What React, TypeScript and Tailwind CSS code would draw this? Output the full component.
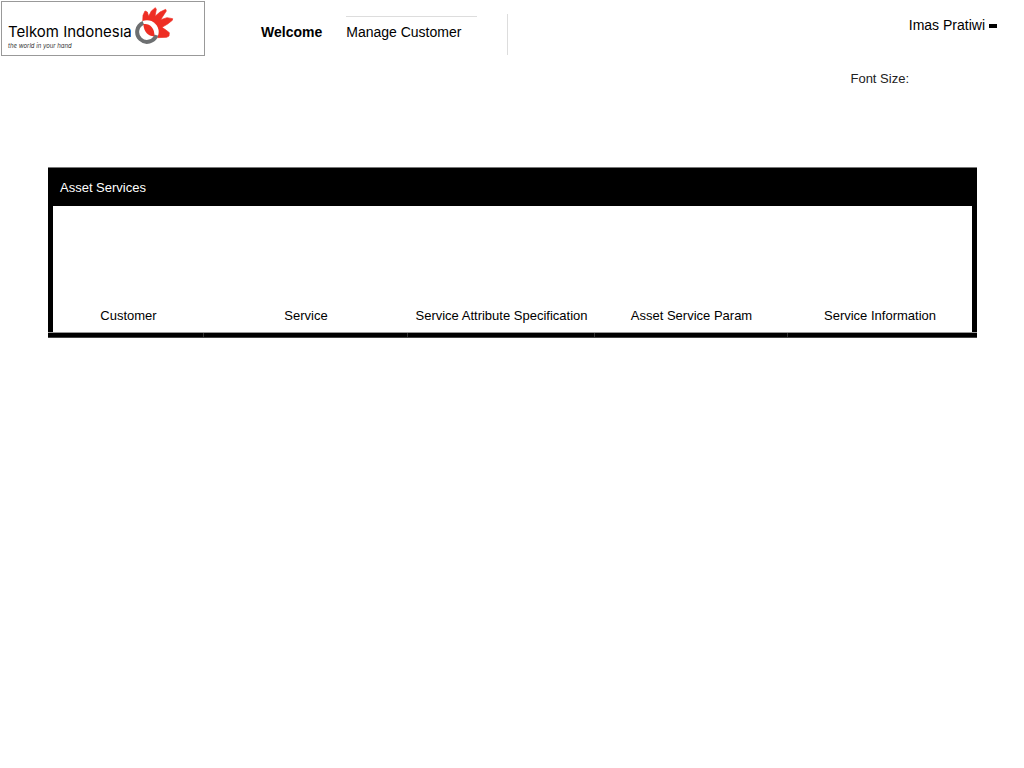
const services = [
  'Customer',
  'Service',
  'Service Attribute Specification',
  'Asset Service Param',
  'Service Information',
];

function HandMark() {
  return (
    <svg viewBox="18 12 120 114" className="h-[38px] w-10 shrink-0" aria-hidden="true">
      <path
        d="M44 62L45 40L51 27L58 30L62 43L70 27L82 17L85 22L81 43L96 30L113 22L115 27L98 53L117 47L134 50L133 55L119 66L102 76L115 85L124 92L123 102L116 106L88 107L57 88Z"
        fill="#ee2e24"
        stroke="#ee2e24"
        strokeWidth="2"
        strokeLinejoin="round"
      />
      <circle cx="57" cy="90" r="35" fill="#fff" />
      <path d="M46 62.7A29.5 29.5 0 1 0 85 99.5" fill="none" stroke="#6d6f71" strokeWidth="12" />
      <path d="M46 67C62 63 81 76 79 103C62 104 48 91 46 67Z" fill="#ee2e24" />
    </svg>
  );
}

function Logo() {
  return (
    <a
      href="#home"
      aria-label="Telkom Indonesia"
      className="mt-px ml-px flex h-[55px] w-[204px] shrink-0 items-start border border-[#999] pt-1 pl-1.5"
    >
      <span className="flex w-[126px] flex-col pt-4 font-['Inter',sans-serif] whitespace-nowrap text-black">
        <span className="text-[15px] leading-5">Telkom Indonesıa</span>
        <span className="text-[6px] leading-[8px] text-[#333] italic">the world in your hand</span>
      </span>
      <HandMark />
    </a>
  );
}

export default function App() {
  return (
    <div className="min-h-screen bg-white font-['Liberation_Sans',Arial,sans-serif] text-black">
      <header className="flex items-start">
        <Logo />
        <nav className="ml-14 flex h-[55px] items-start gap-6 text-[14px] leading-4">
          <a href="#welcome" className="pt-6 font-bold">
            Welcome
          </a>
          <span className="mt-3.5 flex h-[41px] items-start border-r border-[#ddd] pt-0.5 pr-[30px]">
            <a href="#customers" className="w-[131px] border-t border-[#ddd] pt-[7px] whitespace-nowrap">
              Manage Customer
            </a>
          </span>
        </nav>
        <button
          type="button"
          className="mt-[17px] mr-[27px] ml-auto flex items-center gap-1 text-[14px] leading-4 whitespace-nowrap"
        >
          Imas Pratiwi
          <span className="mt-0.5 h-1 w-2 bg-black" />
        </button>
      </header>
      <div className="flex justify-end pt-[15px] pr-[115px] text-[13px] leading-4 text-[#222]">Font Size:</div>
      <main className="px-12 pt-20">
        <section className="-mr-px bg-black">
          <h1 className="border-t border-[#777] px-3 pt-3 pb-2.5 text-[13px] leading-4 text-white">Asset Services</h1>
          <ul className="mx-[5px] grid grid-cols-[151fr_204fr_187fr_193fr_184fr] bg-white pt-[102px] pb-2 text-[13px] leading-4">
            {services.map((name) => (
              <li key={name} className="text-center whitespace-nowrap">
                <a href="#service">{name}</a>
              </li>
            ))}
          </ul>
          <div className="border-y border-t-[#999] border-b-[#444] px-[5px]">
            <div className="grid h-1 grid-cols-[151fr_204fr_187fr_193fr_184fr] divide-x divide-[#333]">
              {services.map((name) => (
                <span key={name} />
              ))}
            </div>
          </div>
        </section>
      </main>
    </div>
  );
}
